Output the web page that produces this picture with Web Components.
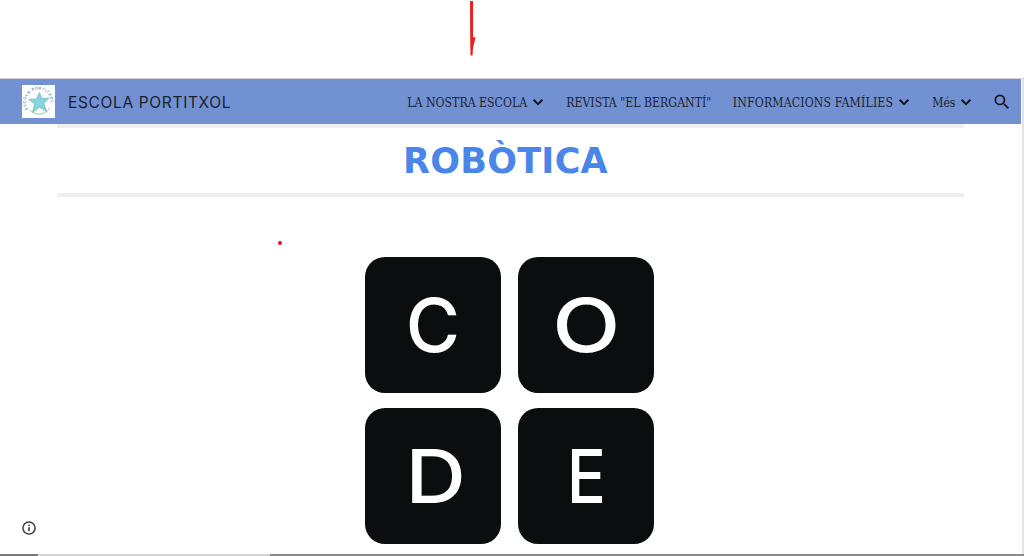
<!DOCTYPE html>
<html lang="ca">
<head>
<meta charset="utf-8">
<title>Robòtica</title>
<style>
	html, body { margin: 0; height: 556px; overflow: hidden; background: #fff; }
</style>
</head>
<body>
<site-page>
	<site-header slot="header" name="ESCOLA PORTITXOL">
		<nav-item menu>LA NOSTRA ESCOLA</nav-item>
		<nav-item>REVISTA "EL BERGANTÍ"</nav-item>
		<nav-item menu style="letter-spacing: .14px">INFORMACIONS FAMÍLIES</nav-item>
		<nav-item menu>Més</nav-item>
	</site-header>
	<page-title>ROBÒTICA</page-title>
	<code-logo>
		<code-key>C</code-key>
		<code-key style="--sx: 1.2">O</code-key>
		<code-key style="--sx: 1.13; --dx: 3px">D</code-key>
		<code-key style="--sx: .88">E</code-key>
	</code-logo>
</site-page>

<script>
const pageTemplate = document.createElement('template')
pageTemplate.innerHTML = `
	<style>
		:host {
			display: block;
			position: relative;
			width: 1024px;
			height: 556px;
			overflow: hidden;
			font-family: "Inter", "Liberation Sans", sans-serif;
		}
		.top {
			height: 78px;
			border-bottom: 1px solid #d4d4d4;
		}
		.frame {
			width: 1021px;
		}
		main {
			display: flex;
			flex-direction: column;
			align-items: center;
		}
		.side {
			position: absolute;
			left: 1022px;
			top: 79px;
			bottom: 0;
			width: 2px;
			background: #e4e4e4;
		}
		.pen {
			position: absolute;
			left: 462px;
			top: 0;
		}
		.dot {
			position: absolute;
			left: 278px;
			top: 241px;
			width: 4px;
			height: 4px;
			border-radius: 50%;
			background: #e0201f;
		}
		.info {
			position: absolute;
			left: 21px;
			top: 520px;
		}
		.edge {
			position: absolute;
			left: 0;
			right: 0;
			bottom: 0;
			height: 2px;
			background: linear-gradient(90deg, #7a7a7a 0 38px, #d4d4d4 38px 270px, #8a8a8a 270px);
		}
	</style>
	<div class="top"></div>
	<div class="frame">
		<slot name="header"></slot>
		<main><slot></slot></main>
	</div>
	<div class="side"></div>
	<svg class="pen" width="20" height="58" viewBox="0 0 20 58">
		<path d="M8 1 L11 1 L11 37 L13.5 37.5 L11 48 L10.5 55.5 L8.5 55.5 L8.2 40 Z" fill="#e8201f"/>
	</svg>
	<div class="dot"></div>
	<svg class="info" width="16" height="16" viewBox="0 0 16 16">
		<circle cx="8" cy="8" r="6.1" fill="none" stroke="#3c4043" stroke-width="1.5"/>
		<rect x="7.2" y="7.2" width="1.6" height="4" fill="#3c4043"/>
		<rect x="7.2" y="4.6" width="1.6" height="1.6" fill="#3c4043"/>
	</svg>
	<div class="edge"></div>
`

class SitePage extends HTMLElement {
	constructor() {
		super()
		this.attachShadow({ mode: 'open' }).appendChild(pageTemplate.content.cloneNode(true))
	}
}
customElements.define('site-page', SitePage)

const headerTemplate = document.createElement('template')
headerTemplate.innerHTML = `
	<style>
		:host {
			display: flex;
			align-items: center;
			height: 45px;
			padding: 0 9px 0 22px;
			background: #7291d2;
			color: #1a1f2e;
		}
		.logo {
			display: block;
			width: 33px;
			height: 33px;
			margin-right: 13px;
			background: #fff;
		}
		.name {
			flex: 1;
			padding-top: 2px;
			font-family: "Inter", "Liberation Sans", sans-serif;
			font-size: 15.5px;
			letter-spacing: .65px;
		}
		nav {
			display: flex;
			align-items: center;
			gap: 21.5px;
		}
		.search {
			display: block;
			margin-left: 19px;
		}
	</style>
	<svg class="logo" viewBox="0 0 33 33">
		<defs><path id="ring" d="M6 24 A12.4 12.4 0 1 1 28 21"/></defs>
		<text font-family="Inter, sans-serif" font-size="3.9" font-weight="600" fill="#5f92b8" letter-spacing=".5"><textPath href="#ring">ESCOLA PORTITXOL</textPath></text>
		<path d="M7.5 25 A13 13 0 0 0 28 23" fill="none" stroke="#84cb84" stroke-width=".9"/>
		<path d="M17.5 7.5 L19.8 13.6 L27 13 L21.8 18.3 L24.5 26.5 L17.5 22.2 L10.5 27.5 L12.6 19 L7 14.3 L14.3 14.2 Z" fill="#8ad5dd" stroke="#5fb4c4" stroke-width=".7" stroke-linejoin="round"/>
	</svg>
	<div class="name"></div>
	<nav><slot></slot></nav>
	<svg class="search" width="20" height="20" viewBox="0 0 24 24">
		<path d="M15.5 14h-.79l-.28-.27A6.47 6.47 0 0 0 16 9.5 6.5 6.5 0 1 0 9.5 16c1.61 0 3.09-.59 4.23-1.57l.27.28v.79l5 4.99L20.49 19l-4.99-5zm-6 0C7.01 14 5 11.99 5 9.5S7.01 5 9.5 5 14 7.01 14 9.5 11.99 14 9.5 14z" fill="#14171f"/>
	</svg>
`

class SiteHeader extends HTMLElement {
	constructor() {
		super()
		this.attachShadow({ mode: 'open' }).appendChild(headerTemplate.content.cloneNode(true))
		this.shadowRoot.querySelector('.name').textContent = this.getAttribute('name')
	}
}
customElements.define('site-header', SiteHeader)

const navTemplate = document.createElement('template')
navTemplate.innerHTML = `
	<style>
		:host {
			display: inline-flex;
			align-items: center;
			gap: 3.5px;
			font-family: "DejaVu Serif", serif;
			font-size: 12.2px;
			font-stretch: condensed;
			white-space: nowrap;
		}
		.label { padding-top: 2px; }
		svg { display: none; }
		:host([menu]) svg { display: block; }
	</style>
	<span class="label"><slot></slot></span>
	<svg width="14" height="14" viewBox="0 0 14 14">
		<path d="M2.6 4.8 L7 9.2 L11.4 4.8" fill="none" stroke="#14171f" stroke-width="2"/>
	</svg>
`

class NavItem extends HTMLElement {
	constructor() {
		super()
		this.attachShadow({ mode: 'open' }).appendChild(navTemplate.content.cloneNode(true))
	}
}
customElements.define('nav-item', NavItem)

const titleTemplate = document.createElement('template')
titleTemplate.innerHTML = `
	<style>
		:host {
			display: block;
			box-sizing: content-box;
			width: 897px;
			height: 65px;
			padding-right: 10px;
			border-top: 4px solid #efefef;
			border-bottom: 4px solid #efefef;
			text-align: center;
			color: #4a86e8;
			font-family: "DejaVu Sans", "Liberation Sans", sans-serif;
			font-size: 35px;
			font-weight: 700;
			letter-spacing: .25px;
			line-height: 67px;
		}
	</style>
	<slot></slot>
`

class PageTitle extends HTMLElement {
	constructor() {
		super()
		this.attachShadow({ mode: 'open' }).appendChild(titleTemplate.content.cloneNode(true))
	}
}
customElements.define('page-title', PageTitle)

const logoTemplate = document.createElement('template')
logoTemplate.innerHTML = `
	<style>
		:host {
			display: grid;
			grid-template-columns: 136px 136px;
			grid-auto-rows: 136px;
			column-gap: 17px;
			row-gap: 15px;
			margin: 60px 2px 0 0;
		}
	</style>
	<slot></slot>
`

class CodeLogo extends HTMLElement {
	constructor() {
		super()
		this.attachShadow({ mode: 'open' }).appendChild(logoTemplate.content.cloneNode(true))
	}
}
customElements.define('code-logo', CodeLogo)

const keyTemplate = document.createElement('template')
keyTemplate.innerHTML = `
	<style>
		:host {
			display: flex;
			align-items: center;
			justify-content: center;
			border-radius: 20px;
			background: #0b0e0f;
			color: #fff;
			font-family: "Inter", "Liberation Sans", sans-serif;
			font-size: 74px;
			font-weight: 450;
			line-height: 1;
		}
		span {
			display: inline-block;
			transform: translateX(var(--dx, 0)) scaleX(var(--sx, 1));
		}
	</style>
	<span><slot></slot></span>
`

class CodeKey extends HTMLElement {
	constructor() {
		super()
		this.attachShadow({ mode: 'open' }).appendChild(keyTemplate.content.cloneNode(true))
	}
}
customElements.define('code-key', CodeKey)
</script>
</body>
</html>
